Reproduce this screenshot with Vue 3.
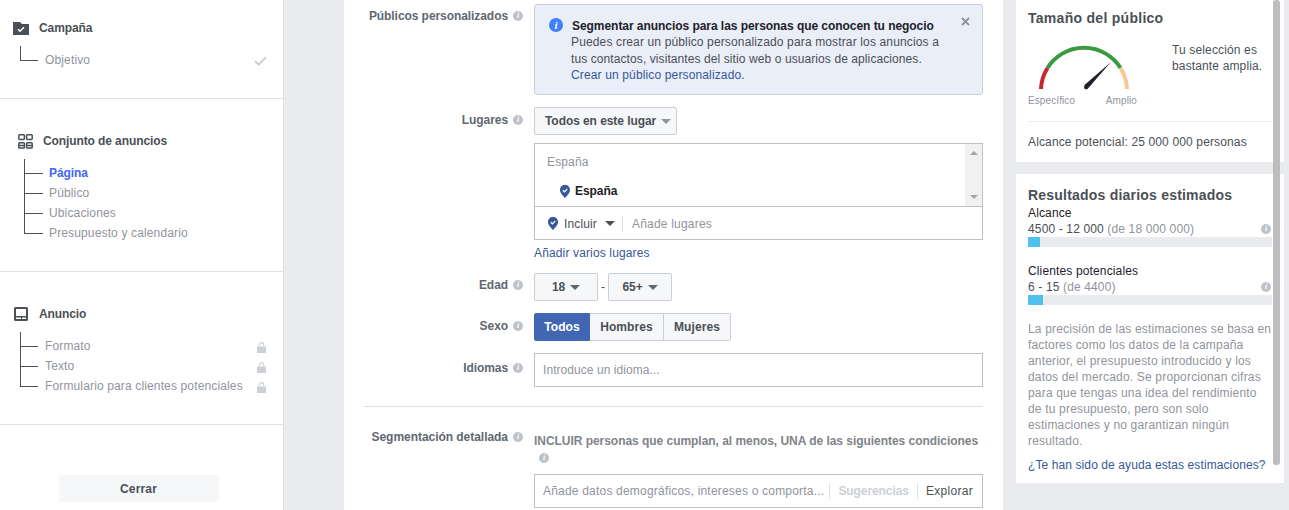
<script setup>
const adsetItems = [
  { t: 'Página', active: true },
  { t: 'Público' },
  { t: 'Ubicaciones' },
  { t: 'Presupuesto y calendario' }
]
const adItems = ['Formato', 'Texto', 'Formulario para clientes potenciales']
const paragraph = [
  'La precisión de las estimaciones se basa en',
  'factores como los datos de la campaña',
  'anterior, el presupuesto introducido y los',
  'datos del mercado. Se proporcionan cifras',
  'para que tengas una idea del rendimiento',
  'de tu presupuesto, pero son solo',
  'estimaciones y no garantizan ningún',
  'resultado.'
]
</script>

<template>
  <div class="page">
    <aside class="side">
      <section class="sec sec1">
        <div class="head">
          <svg class="hicon" width="16" height="14" viewBox="0 0 16 14"><path d="M0 1h7l2 2h7v11H0z" fill="#4b4f56"/><path d="M5 8.2l2 2 4-4" fill="none" stroke="#fff" stroke-width="1.6"/></svg>
          <span class="htext">Campaña</span>
        </div>
        <div class="tree tree-a">
          <div class="row first last">
            <span class="conn"><i></i></span>
            <span class="lbl">Objetivo</span>
            <svg class="state" width="13" height="10" viewBox="0 0 13 10"><path d="M1 5l3.6 3.6L12 1.2" fill="none" stroke="#ccd0d5" stroke-width="2"/></svg>
          </div>
        </div>
      </section>
      <section class="sec sec2">
        <div class="head head2">
          <svg width="15" height="15" viewBox="0 0 15 15" fill="none" stroke="#4b4f56" stroke-width="1.5"><rect x=".8" y=".8" width="5.6" height="4.6" rx=".8"/><rect x="8.6" y=".8" width="5.6" height="4.6" rx=".8"/><rect x=".8" y="8.8" width="5.6" height="5.2" rx=".8"/><rect x="8.6" y="8.8" width="5.6" height="5.2" rx=".8"/><path d="M1 11.500h5M9 11.500h5"/></svg>
          <span class="htext">Conjunto de anuncios</span>
        </div>
        <div class="tree tree-b">
          <div v-for="(it, i) in adsetItems" :key="it.t" class="row" :class="{ first: i === 0, last: i === adsetItems.length - 1 }">
            <span class="conn wide"><i></i><b v-if="i !== adsetItems.length - 1"></b></span>
            <span class="lbl" :class="{ active: it.active }">{{ it.t }}</span>
          </div>
        </div>
      </section>
      <section class="sec sec3">
        <div class="head">
          <svg class="hicon3" width="14" height="14" viewBox="0 0 14 14"><path fill-rule="evenodd" d="M1.500 0h11A1.500 1.500 0 0 1 14 1.500v11a1.500 1.500 0 0 1-1.500 1.500h-11A1.500 1.500 0 0 1 0 12.500v-11A1.500 1.500 0 0 1 1.500 0zM2 2v7h10V2zM2 10.500V12h5v-1.500zM8 10.500V12h4v-1.500z" fill="#4b4f56"/></svg>
          <span class="htext t11">Anuncio</span>
        </div>
        <div class="tree tree-a">
          <div v-for="(t, i) in adItems" :key="t" class="row" :class="{ first: i === 0, last: i === adItems.length - 1 }">
            <span class="conn"><i></i><b v-if="i !== adItems.length - 1"></b></span>
            <span class="lbl">{{ t }}</span>
            <svg class="state lock" width="9" height="11" viewBox="0 0 10 12" preserveAspectRatio="none"><path d="M2.500 5V3.200a2.500 2.500 0 0 1 5 0V5" fill="none" stroke="#ccd0d5" stroke-width="1.200"/><rect y="5" width="10" height="7" fill="#ccd0d5"/></svg>
          </div>
        </div>
      </section>
      <div class="close-wrap"><button class="close">Cerrar</button></div>
    </aside>

    <main class="center">
      <div class="frow r-pub">
        <div class="flabel l-pub">Públicos personalizados<span class="inf">i</span></div>
        <div class="fbody">
          <div class="alert">
            <span class="ainfo">i</span>
            <div class="atext">
              <div class="atitle">Segmentar anuncios para las personas que conocen tu negocio</div>
              <div>Puedes crear un público personalizado para mostrar los anuncios a</div>
              <div class="ln3">tus contactos, visitantes del sitio web o usuarios de aplicaciones.</div>
              <div><a class="link">Crear un público personalizado</a>.</div>
            </div>
            <svg class="ax" width="9" height="9" viewBox="0 0 9 9"><path d="M1 1l7 7M8 1L1 8" stroke="#90949c" stroke-width="1.800"/></svg>
          </div>
        </div>
      </div>

      <div class="frow r-lug">
        <div class="flabel pt">Lugares<span class="inf">i</span></div>
        <div class="fbody">
          <button class="btn drop">Todos en este lugar<span class="caret light"></span></button>
          <div class="locbox">
            <div class="loctop">
              <div class="loclist">
                <div class="locgray">España</div>
                <div class="locitem">
                  <svg width="10" height="13" viewBox="0 0 10 13"><path d="M5 0c3 0 5 2.100 5 4.900C10 8 7 10.500 5 13 3 10.500 0 8 0 4.900 0 2.100 2 0 5 0z" fill="#365899"/><path d="M2.800 5.200l1.700 1.600 2.800-2.900" fill="none" stroke="#fff" stroke-width="1.200"/></svg>
                  <span>España</span>
                </div>
              </div>
              <div class="sbar"><span class="up"></span><span class="down"></span></div>
            </div>
            <div class="locbot">
              <svg width="10" height="13" viewBox="0 0 10 13"><path d="M5 0c3 0 5 2.100 5 4.900C10 8 7 10.500 5 13 3 10.500 0 8 0 4.900 0 2.100 2 0 5 0z" fill="#365899"/><path d="M2.800 5.200l1.700 1.600 2.800-2.900" fill="none" stroke="#fff" stroke-width="1.200"/></svg>
              <span class="incl">Incluir</span>
              <span class="caret dark"></span>
              <span class="vsep"></span>
              <span class="ph">Añade lugares</span>
            </div>
          </div>
          <a class="link addm">Añadir varios lugares</a>
        </div>
      </div>

      <div class="frow r-edad">
        <div class="flabel l-edad">Edad<span class="inf">i</span></div>
        <div class="fbody ages">
          <button class="btn age">18<span class="caret mid"></span></button>
          <span class="dash">-</span>
          <button class="btn age">65+<span class="caret mid"></span></button>
        </div>
      </div>

      <div class="frow r-sexo">
        <div class="flabel pt">Sexo<span class="inf">i</span></div>
        <div class="fbody seg">
          <button class="sg on">Todos</button>
          <button class="sg w2">Hombres</button>
          <button class="sg w3">Mujeres</button>
        </div>
      </div>

      <div class="frow r-idi">
        <div class="flabel pt2">Idiomas<span class="inf">i</span></div>
        <div class="fbody"><div class="inp">Introduce un idioma...</div></div>
      </div>

      <hr class="hr" />

      <div class="frow">
        <div class="flabel l-seg">Segmentación detallada<span class="inf">i</span></div>
        <div class="fbody">
          <div class="incl-title">INCLUIR personas que cumplan, al menos, UNA de las siguientes condiciones</div>
          <div class="incl-inf"><span class="inf nom">i</span></div>
          <div class="inp seginp">
            <span class="grow">Añade datos demográficos, intereses o comporta...</span>
            <span class="vsep"></span>
            <span class="sug">Sugerencias</span>
            <span class="vsep"></span>
            <span class="exp">Explorar</span>
          </div>
        </div>
      </div>
    </main>

    <aside class="right">
      <div class="card c1">
        <div class="ctitle">Tamaño del público</div>
        <div class="gauge-row">
          <div class="gauge">
            <svg width="112" height="50" viewBox="0 0 112 50" fill="none" stroke-width="4">
              <path d="M14 46A43 43 0 0 1 20.500 25" stroke="#c9252d"/>
              <path d="M20.500 25A43 43 0 0 1 93.500 25" stroke="#3a9a3f"/>
              <path d="M93.500 25A43 43 0 0 1 100 46" stroke="#fcc692"/>
              <path d="M57.500 42L84 19 60.500 46Q56 47.500 57.500 42z" fill="#1d2129" stroke="none"/>
            </svg>
            <div class="glabels"><span>Específico</span><span>Amplio</span></div>
          </div>
          <div class="gtext">Tu selección es<br />bastante amplia.</div>
        </div>
        <div class="csep"></div>
        <div class="reach">Alcance potencial: 25 000 000 personas</div>
      </div>

      <div class="card c2">
        <div class="ctitle t2">Resultados diarios estimados</div>
        <div class="mname">Alcance</div>
        <div class="mval"><span>4500 - 12 000 <em>(de 18 000 000)</em></span><span class="inf nom m">i</span></div>
        <div class="bar"><span class="fill f1"></span></div>
        <div class="mname n2">Clientes potenciales</div>
        <div class="mval"><span>6 - 15 <em>(de 4400)</em></span><span class="inf nom m">i</span></div>
        <div class="bar"><span class="fill f2"></span></div>
        <div class="para"><div v-for="l in paragraph" :key="l">{{ l }}</div></div>
        <a class="link help">¿Te han sido de ayuda estas estimaciones?</a>
      </div>
      <div class="scroll"></div>
    </aside>
  </div>
</template>

<style>
html, body { margin: 0; background: #e9ebee; }
</style>

<style scoped>
.page {
  display: flex;
  width: 1289px;
  height: 510px;
  overflow: hidden;
  background: #e9ebee;
  font: 12px/16px "Liberation Sans", Arial, sans-serif;
  color: #4b4f56;
  letter-spacing: .14px;
}
button { font: inherit; letter-spacing: inherit; margin: 0; }

/* sidebar */
.side { width: 283px; flex: none; background: #fff; border-right: 1px solid #dddfe2; display: flex; flex-direction: column; }
.sec { border-bottom: 1px solid #dddfe2; box-sizing: border-box; }
.sec1 { height: 99px; padding-top: 20px; }
.sec2 { height: 173px; padding-top: 34px; }
.sec3 { height: 153px; padding-top: 34px; }
.head { display: flex; align-items: center; height: 16px; padding-left: 13px; }
.head2 { padding-left: 18px; }
.htext { font-weight: 700; margin-left: 10px; color: #4b4f56; letter-spacing: -.1px; }
.t11 { margin-left: 11px; }
.hicon3 { margin-left: 1px; }
.tree { margin-top: 9px; }
.tree-a { padding-left: 20px; margin-top: 10px; }
.tree-b { padding-left: 24px; margin-top: 10px; }
.row { display: flex; align-items: flex-end; height: 20px; padding-right: 16px; }
.row.first { height: 24px; }
.conn { display: flex; flex-direction: column; align-self: stretch; width: 18px; flex: none; }
.conn.wide { width: 19px; }
.conn i { display: block; height: 10px; border-left: 1px solid #4b4f56; border-bottom: 1px solid #4b4f56; }
.row.first .conn i { height: 14px; }
.conn b { display: block; flex: 1; border-left: 1px solid #4b4f56; }
.lbl { line-height: 20px; margin-left: 7px; color: #90949c; flex: 1; white-space: nowrap; }
.wide + .lbl { margin-left: 6px; }
.lbl.active { color: #4267f5; font-weight: 700; letter-spacing: -.08px; }
.state { align-self: center; margin-top: 2px; flex: none; }
.lock { margin-right: 1px; }
.row.first .state { margin-top: 6px; }
.close-wrap { flex: 1; display: flex; justify-content: center; padding: 50px 6px 0 0; }
.close { width: 160px; height: 27px; border: 0; border-radius: 3px; background: #f6f7f9; color: #4b4f56; font-weight: 700; letter-spacing: .15px; }

/* center */
.center { width: 619px; flex: none; margin-left: 60px; padding: 4px 20px 0; background: #fff; }
.frow { display: flex; }
.flabel { width: 170px; flex: none; box-sizing: border-box; padding-right: 11px; display: flex; justify-content: flex-end; color: #606770; font-weight: 700; line-height: 16px; padding-top: 3px; white-space: nowrap; letter-spacing: -.07px; }
.l-pub { padding-top: 4px; }
.l-edad { padding-top: 4px; }
.l-seg { padding-top: 1px; letter-spacing: -.04px; }
.flabel.pt { padding-top: 5px; }
.flabel.pt2 { padding-top: 7px; }
.inf { display: inline-flex; width: 10px; height: 10px; margin: 3px 0 0 5px; border-radius: 50%; background: #bec2c9; color: #fff; font: italic 700 8px/10px "Liberation Serif", serif; justify-content: center; flex: none; letter-spacing: 0; }
.nom { margin: 0; }
.fbody { flex: 1; min-width: 0; }
.alert { display: flex; height: 91px; box-sizing: border-box; border: 1px solid #ccd0d5; border-radius: 3px; background: #e9eef8; padding: 13px 12px 0 14px; color: #4b4f56; }
.ainfo { width: 14px; height: 14px; border-radius: 50%; background: #4080ff; color: #fff; font: italic 700 11px/14px "Liberation Serif", serif; text-align: center; flex: none; letter-spacing: 0; }
.atext { flex: 1; margin-left: 8px; line-height: 16.300px; }
.atitle { font-weight: 700; color: #1d2129; letter-spacing: -.05px; padding-left: 1px; }
.ln3 { letter-spacing: .09px; }
.ax { margin-top: -1px; }
.link { color: #365899; }
.r-lug { margin-top: 12px; }
.btn { display: inline-flex; align-items: center; box-sizing: border-box; height: 28px; border: 1px solid #ccd0d5; border-radius: 2px; background: #f6f7f9; color: #4b4f56; font-weight: 700; letter-spacing: -.07px; }
.drop { padding: 0 5px 0 10px; }
.caret { display: inline-block; width: 0; height: 0; border: 5px solid transparent; border-bottom: 0; border-top-width: 5px; }
.caret.light { border-top-color: #90949c; margin-left: 5px; }
.caret.mid { border-top-color: #606770; margin-left: 5px; }
.caret.dark { border-top-color: #4b4f56; margin-left: 8px; }
.locbox { margin-top: 8px; box-sizing: border-box; height: 97px; border: 1px solid #bdc1c9; display: flex; flex-direction: column; }
.loctop { height: 62px; display: flex; border-bottom: 1px solid #bdc1c9; }
.loclist { flex: 1; padding: 10px 12px 0; }
.locgray { color: #90949c; }
.locitem { display: flex; align-items: center; margin-top: 13px; margin-left: 13px; color: #1d2129; font-weight: 700; letter-spacing: -.07px; }
.locitem span { margin-left: 5px; }
.sbar { width: 17px; background: #f1f1f1; display: flex; flex-direction: column; justify-content: space-between; align-items: center; padding: 7px 0; box-sizing: border-box; }
.up { width: 0; height: 0; border: 4px solid transparent; border-top: 0; border-bottom-color: #a6a6a6; }
.down { width: 0; height: 0; border: 4px solid transparent; border-bottom: 0; border-top-color: #a6a6a6; }
.locbot { flex: 1; display: flex; align-items: center; padding: 1px 0 0 13px; }
.incl { margin-left: 6px; }
.vsep { width: 1px; height: 16px; background: #dddfe2; flex: none; }
.locbot .vsep { margin-left: 7px; }
.ph { margin-left: 9px; color: #90949c; letter-spacing: .2px; }
.addm { display: block; margin-top: 5px; line-height: 16px; }
.r-edad { margin-top: 12px; }
.ages { display: flex; align-items: center; }
.age { width: 64px; justify-content: center; }
.dash { width: 10px; text-align: center; }
.r-sexo { margin-top: 12px; }
.seg { display: flex; }
.sg { height: 28px; box-sizing: border-box; width: 56px; border: 1px solid #ccd0d5; border-left: 0; background: #f6f7f9; color: #4b4f56; font-weight: 700; padding: 0; letter-spacing: .1px; }
.sg.on { background: #4267b2; color: #fff; border: 1px solid #4267b2; border-radius: 2px 0 0 2px; }
.sg.w2 { width: 74px; }
.sg.w3 { width: 67px; border-radius: 0 2px 2px 0; }
.r-idi { margin-top: 12px; }
.inp { height: 34px; box-sizing: border-box; border: 1px solid #bdc1c9; padding: 0 8px; color: #90949c; line-height: 32px; letter-spacing: .06px; }
.hr { border: 0; height: 1px; background: #dddfe2; margin: 19px 0 21px; }
.incl-title { color: #7f8389; font-weight: 700; padding-top: 5px; white-space: nowrap; letter-spacing: -.04px; }
.incl-inf { display: flex; height: 17px; padding: 4px 0 0 5px; box-sizing: border-box; margin-bottom: 8px; }
.seginp { display: flex; align-items: center; letter-spacing: .2px; }
.grow { flex: 1; white-space: nowrap; }
.sug { color: #ccd0d5; font-weight: 700; margin: 0 8px; letter-spacing: -.08px; }
.exp { color: #4b4f56; margin: 0 1px 0 8px; letter-spacing: .3px; }

/* right */
.right { flex: 1; position: relative; padding-left: 13px; }
.card { width: 268px; box-sizing: border-box; background: #fff; padding: 0 12px; }
.c1 { height: 162px; padding-top: 10px; }
.c2 { height: 309px; margin-top: 12px; padding-top: 13px; }
.ctitle { font-size: 14px; font-weight: 700; line-height: 16px; color: #4b4f56; letter-spacing: .28px; }
.gauge-row { display: flex; margin-top: 14px; height: 70px; }
.gauge { width: 112px; flex: none; }
.gauge svg { display: block; margin-left: -1px; margin-top: 3px; }
.glabels { display: flex; justify-content: space-between; width: 109px; font-size: 10px; line-height: 12px; color: #90949c; letter-spacing: .1px; margin-top: 2px; }
.gtext { margin-left: 32px; margin-top: 2px; color: #4b4f56; }
.csep { height: 1px; background: #e9ebee; margin-top: 11px; }
.reach { margin-top: 12px; color: #4b4f56; }
.t2 { letter-spacing: .21px; }
.mname { margin-top: 2px; color: #1d2129; }
.n2 { margin-top: 16px; }
.mval { display: flex; justify-content: space-between; align-items: center; height: 16px; color: #4b4f56; }
.mval em { font-style: normal; color: #90949c; }
.m { margin-right: 1px; }
.bar { height: 10px; background: #e9ebee; }
.fill { display: block; height: 100%; background: #4fc1ee; }
.f1 { width: 12px; }
.f2 { width: 15px; }
.para { margin-top: 16px; color: #90949c; white-space: nowrap; letter-spacing: .18px; }
.help { display: block; margin-top: 8px; letter-spacing: .1px; white-space: nowrap; }
.scroll { position: absolute; left: 270px; top: 0; width: 7px; height: 465px; border-radius: 3px; background: #bdbdbd; }
</style>
